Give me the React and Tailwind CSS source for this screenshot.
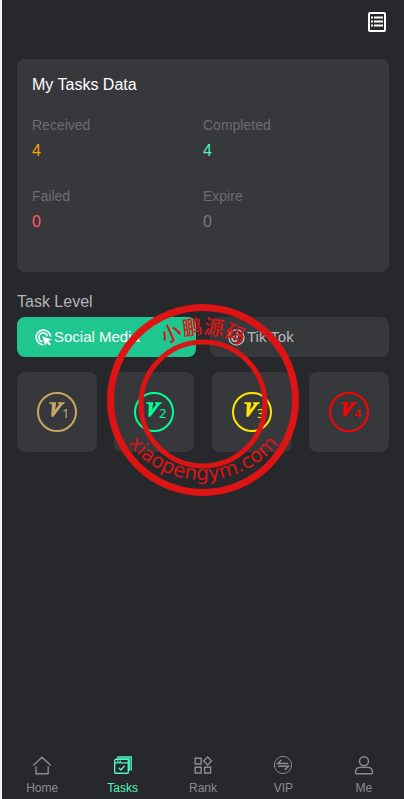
const stats = [
  { label: "Received", value: 4, color: "text-[#ff9f0a]" },
  { label: "Completed", value: 4, color: "text-[#51f7bd]" },
  { label: "Failed", value: 0, color: "text-[#ff5a5f]" },
  { label: "Expire", value: 0, color: "text-[#77787b]" },
];

const levels = [
  { level: 1, color: "text-[#c9a562]" },
  { level: 2, color: "text-[#00ff94]" },
  { level: 3, color: "text-[#ffe600]" },
  { level: 4, color: "text-[#ff0000]" },
];

function ListIcon() {
  return (
    <svg width="20" height="22" viewBox="0 0 20 22" fill="none" stroke="currentColor">
      <rect x="2" y="2" width="16" height="18" rx="1" strokeWidth="2" />
      <path d="M4 6.500h2M4 10.500h2M4 14.500h2M7 6.500h9M7 10.500h9M7 14.500h9" strokeWidth="1.8" />
    </svg>
  );
}

function TargetIcon() {
  return (
    <svg width="17" height="17" viewBox="0 0 17 17" fill="none" stroke="currentColor" strokeWidth="1.6">
      <path d="M8.600 15.700A7.300 7.300 0 1 1 15.700 7.600" />
      <path d="M7.600 12.700A4.400 4.400 0 1 1 12.600 7.200" />
      <path d="M7.200 7.200l9.600 3.300-3.500 1.700 2.700 2.700-1.500 1.500-2.700-2.700-1.400 3.100z" fill="currentColor" stroke="none" />
    </svg>
  );
}

function TikTokIcon() {
  return (
    <svg width="17" height="17" viewBox="0 0 17 17" fill="none" stroke="currentColor">
      <circle cx="8.5" cy="8.5" r="7.6" strokeWidth="1.3" />
      <path d="M6.8 7.5a2.4 2.4 0 1 0 2.2 2.4V3.8c.5 1.7 1.6 2.6 3.3 2.7" strokeWidth="1.8" />
    </svg>
  );
}

function HomeIcon() {
  return (
    <svg width="20" height="20" viewBox="0 0 20 20" fill="none" stroke="currentColor" strokeWidth="1.4">
      <path d="M1.2 10.500L10 2.200l8.800 8.300M4 11.200v7.600h12.200v-7.600" />
    </svg>
  );
}

function TasksIcon() {
  return (
    <svg width="20" height="20" viewBox="0 0 20 20" fill="none" stroke="currentColor" strokeWidth="1.4">
      <path d="M4.2 2h14v13.5M2.7 4h13.5v12" />
      <rect x="1.7" y="4.4" width="13.6" height="13.9" rx="1" />
      <path d="M2 7.9h13M4 6.2h1.5M6.5 6.2H8M5.8 12.7l2.1 2.2 3.8-4.2" />
    </svg>
  );
}

function RankIcon() {
  return (
    <svg width="20" height="20" viewBox="0 0 20 20" fill="none" stroke="currentColor" strokeWidth="1.4">
      <path d="M2.200 3.200h6V9h-6zM2.200 12.200h6V18h-6zM11.600 12.200h6V18h-6zM14.600 1.900l4 4-4 4-4-4z" />
    </svg>
  );
}

function VipIcon() {
  return (
    <svg width="20" height="20" viewBox="0 0 20 20" fill="none" stroke="currentColor">
      <circle cx="10" cy="10" r="8.6" strokeWidth="1" />
      <path d="M15.4 8.6H4.8L8.4 5M4.8 11.3h10.6l-3.6 3.6" strokeWidth="1.5" />
    </svg>
  );
}

function MeIcon() {
  return (
    <svg width="20" height="20" viewBox="0 0 20 20" fill="none" stroke="currentColor" strokeWidth="1.4">
      <circle cx="10" cy="6.200" r="4.500" />
      <path d="M1.500 17.600c0-3.300 2-5.200 4.800-5.200h7.400c2.800 0 4.800 1.900 4.800 5.200 0 .8-.4 1.200-1.200 1.200H2.700c-.8 0-1.200-.4-1.200-1.200z" />
    </svg>
  );
}

function LevelBadge({ level }) {
  return (
    <svg width="40" height="40" viewBox="0 0 40 40" fill="none" aria-label={`V${level}`}>
      <circle cx="20" cy="20" r="19" stroke="currentColor" strokeWidth="2" />
      <path
        d="M12.300 10.200H19.300L18 18 22.300 12.300 20.900 11.800 21.200 10.200H28L27.500 11.600 25.600 12.600 16.400 24.800H14.300L14.900 12.300 12.200 11.600z"
        fill="currentColor"
      />
      <text x="25" y="26" fill="currentColor" className="font-['Noto_Sans',sans-serif] text-[13px]">
        {level}
      </text>
    </svg>
  );
}

function Seal() {
  return (
    <svg
      className="pointer-events-none absolute left-1/2 -top-[14px] -translate-x-1/2 text-[#dc1414]"
      width="194"
      height="194"
      viewBox="0 0 194 194"
      fill="none"
    >
      <defs>
        <path id="seal-top" d="M26 102a71 71 0 0 1 142 0" />
        <path id="seal-bottom" d="M2 82a95 95 0 0 0 190 0" />
      </defs>
      <circle cx="97" cy="97" r="92.500" stroke="currentColor" strokeWidth="7" />
      <circle cx="97" cy="101" r="62" stroke="currentColor" strokeWidth="5" />
      <text fill="currentColor" textAnchor="middle" className="font-['Noto_Sans_CJK_SC',sans-serif] text-[20px] font-medium">
        <textPath href="#seal-top" startOffset="50%">小鹏源码</textPath>
      </text>
      <text fill="currentColor" textAnchor="middle" className="font-['DejaVu_Sans',sans-serif] text-[20px]">
        <textPath href="#seal-bottom" startOffset="50%">xiaopengym.com</textPath>
      </text>
    </svg>
  );
}

const navItems = [
  { label: "Home", Icon: HomeIcon },
  { label: "Tasks", Icon: TasksIcon, active: true },
  { label: "Rank", Icon: RankIcon },
  { label: "VIP", Icon: VipIcon },
  { label: "Me", Icon: MeIcon },
];

export default function App() {
  return (
    <div className="flex min-h-screen flex-col border-l-2 border-[#f2f2f2] bg-[#27282c] font-['Liberation_Sans',Arial,sans-serif]">
      <header className="flex h-11 items-center justify-end px-[17px]">
        <button type="button" aria-label="Task list" className="text-white">
          <ListIcon />
        </button>
      </header>

      <main className="flex-1 px-[15px] pt-[15px]">
        <section className="rounded-lg bg-[#37383c] px-[15px] pt-4 pb-10">
          <h1 className="text-[16px] leading-5 text-white">My Tasks Data</h1>
          <dl className="mt-5 grid grid-cols-2 gap-y-[25px]">
            {stats.map((s) => (
              <div key={s.label}>
                <dt className="text-[14px] leading-5 text-[#6b6c70]">{s.label}</dt>
                <dd className={`mt-[6px] text-[16px] leading-5 ${s.color}`}>{s.value}</dd>
              </div>
            ))}
          </dl>
        </section>

        <h2 className="mt-5 text-[16px] leading-5 text-[#b4b4b6]">Task Level</h2>
        <div className="relative mt-[5px]">
          <div className="grid grid-cols-2 gap-[14px]">
            <button
              type="button"
              className="flex h-10 items-center gap-[2px] rounded-lg bg-[#20c690] pl-[18px] text-[15px] leading-5 text-white"
            >
              <TargetIcon />
              Social Media
            </button>
            <button
              type="button"
              className="flex h-10 items-center gap-[2px] rounded-lg bg-[#37383c] pl-[18px] text-[15px] leading-5 text-[#b9b9bb]"
            >
              <TikTokIcon />
              Tik Tok
            </button>
          </div>
          <div className="mt-[15px] flex justify-between">
            {levels.map((l) => (
              <button
                key={l.level}
                type="button"
                className={`flex size-20 items-center justify-center rounded-lg bg-[#37383c] ${l.color}`}
              >
                <LevelBadge level={l.level} />
              </button>
            ))}
          </div>
          <Seal />
        </div>
      </main>

      <nav className="grid h-[50px] grid-cols-5">
        {navItems.map(({ label, Icon, active }) => (
          <a
            key={label}
            href="#"
            className={`flex flex-col items-center pt-[6px] text-[12px] leading-4 ${active ? "text-[#51f7bd]" : "text-[#8c8c8e]"}`}
          >
            <Icon />
            <span className="mt-[5px]">{label}</span>
          </a>
        ))}
      </nav>
    </div>
  );
}
